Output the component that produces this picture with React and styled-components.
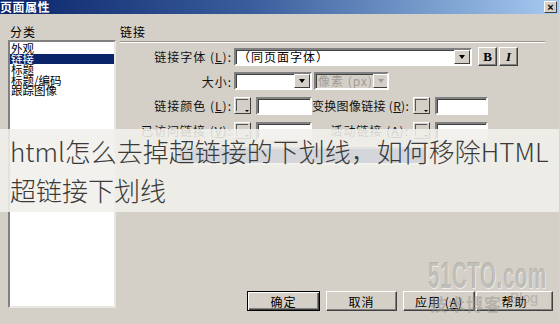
import React from "react";
import styled, { createGlobalStyle } from "styled-components";

const Global = createGlobalStyle`
  html, body { margin: 0; padding: 0; background: #d4d0c8; }
  body { font-family: "Noto Sans CJK SC", "Liberation Sans", sans-serif; }
`;

const Page = styled.div`
  position: relative;
  width: 559px;
  height: 324px;
  overflow: hidden;
  background: #d4d0c8;
  display: flex;
  flex-direction: column;
  font-size: 12px;
  color: #000;
`;

const TitleBar = styled.div`
  height: 14px;
  flex: none;
  display: flex;
  align-items: center;
  justify-content: space-between;
  background: linear-gradient(90deg, #0a246a 0%, #3a5e9c 45%, #a6caf0 100%);
`;

const Title = styled.div`
  color: #fff;
  font-weight: 700;
  font-size: 12px;
  line-height: 14px;
  letter-spacing: 0.5px;
`;

const CloseBtn = styled.div`
  width: 13px;
  height: 12px;
  margin-right: 2px;
  box-sizing: border-box;
  background: #d4d0c8;
  border: 1px solid;
  border-color: #fff #404040 #404040 #fff;
  display: flex;
  align-items: center;
  justify-content: center;
  font-family: "Liberation Sans", sans-serif;
  font-weight: 700;
  font-size: 11px;
  line-height: 1;
`;

const Body = styled.div`
  flex: 1;
  display: flex;
  gap: 4px;
  padding: 12px 14px 13px 8px;
  min-height: 0;
`;

const LeftCol = styled.div`
  width: 108px;
  flex: none;
  display: flex;
  flex-direction: column;
  padding-bottom: 3px;
`;

const SmallLabel = styled.div`
  line-height: 12px;
  padding-left: 2px;
  letter-spacing: 1px;
  margin-bottom: 2px;
`;

const ListBox = styled.div`
  flex: 1;
  background: #fff;
  box-sizing: border-box;
  border: 2px solid;
  border-color: #808080 #e8e6e0 #e8e6e0 #808080;
  padding-top: 1px;
`;

const ListItem = styled.div`
  font-size: 11.5px;
  line-height: 10.6px;
  height: 10.6px;
  padding-left: 1px;
  white-space: nowrap;
  background: ${(p) => (p.$sel ? "#0a246a" : "transparent")};
  color: ${(p) => (p.$sel ? "#fff" : "#000")};
`;

const RightCol = styled.div`
  flex: 1;
  min-width: 0;
  display: flex;
  flex-direction: column;
`;

const Heading = styled.div`
  line-height: 12px;
  letter-spacing: 1px;
`;

const Rule = styled.div`
  height: 0;
  margin-top: 3px;
  border-top: 1px solid #9a9790;
  border-bottom: 1px solid #fff;
  margin-bottom: 4px;
`;

const Form = styled.div`
  display: flex;
  flex-direction: column;
  gap: 6px;
`;

const Row = styled.div`
  display: flex;
  align-items: center;
  height: ${(p) => p.$h || 19}px;
`;

const Label = styled.div`
  width: ${(p) => p.$w}px;
  flex: none;
  box-sizing: border-box;
  text-align: right;
  padding-right: ${(p) => p.$pr || 2}px;
  letter-spacing: ${(p) => p.$ls ?? 1}px;
  white-space: nowrap;
  color: #111;
`;

const Sunken = styled.div`
  width: ${(p) => p.$w}px;
  height: 18px;
  flex: none;
  box-sizing: border-box;
  border: 2px solid;
  border-color: #808080 #fff #fff #808080;
  box-shadow: inset 1px 1px 0 #404040;
  background: ${(p) => (p.$disabled ? "#d4d0c8" : "#fff")};
  display: flex;
  align-items: center;
  margin-left: ${(p) => p.$ml || 0}px;
  overflow: hidden;
`;

const SelText = styled.div`
  flex: 1;
  align-self: stretch;
  padding-left: 2px;
  letter-spacing: 1px;
  white-space: nowrap;
  line-height: 14px;
  color: ${(p) => (p.$disabled ? "#a09d96" : p.$hl ? "#fff" : "#000")};
  background: ${(p) => (p.$hl ? "#0a246a" : "transparent")};
`;

const DropBtn = styled.div`
  width: 16px;
  height: 14px;
  flex: none;
  box-sizing: border-box;
  background: #d4d0c8;
  border: 1px solid;
  border-color: #fff #404040 #404040 #fff;
  display: flex;
  align-items: center;
  justify-content: center;
  &::after {
    content: "";
    border-left: 3.5px solid transparent;
    border-right: 3.5px solid transparent;
    border-top: 4px solid ${(p) => (p.$disabled ? "#a09d96" : "#000")};
  }
`;

const RaisedBtn = styled.div`
  width: 19px;
  height: 19px;
  box-sizing: border-box;
  background: #d4d0c8;
  border: 1px solid;
  border-color: #fff #404040 #404040 #fff;
  box-shadow: inset -1px -1px 0 #808080;
  display: flex;
  align-items: center;
  justify-content: center;
  margin-left: ${(p) => p.$ml || 0}px;
  font-family: "Liberation Serif", serif;
  font-weight: 700;
  font-size: 13px;
  font-style: ${(p) => (p.$italic ? "italic" : "normal")};
`;

const Swatch = styled.div`
  width: 17px;
  height: 17px;
  flex: none;
  box-sizing: border-box;
  border: 1px solid;
  border-color: #fff #404040 #404040 #fff;
  background: #d4d0c8;
  position: relative;
  &::before {
    content: "";
    position: absolute;
    left: 1px;
    top: 1px;
    width: 11px;
    height: 11px;
    border-top: 1px solid #555;
    border-left: 1px solid #555;
  }
  &::after {
    content: "";
    position: absolute;
    right: 1px;
    bottom: 1px;
    border-left: 2px solid transparent;
    border-right: 2px solid transparent;
    border-top: 2px solid #000;
  }
`;

const U = styled.span`
  text-decoration: underline;
`;

const Buttons = styled.div`
  margin-top: auto;
  display: flex;
  justify-content: flex-end;
  margin-right: -8px;
`;

const Btn = styled.div`
  width: ${(p) => p.$w || 71}px;
  flex: none;
  margin-left: ${(p) => p.$ml || 0}px;
  height: 20px;
  box-sizing: border-box;
  background: #d4d0c8;
  border: 1px solid;
  border-color: ${(p) => (p.$def ? "#000" : "#fff #404040 #404040 #fff")};
  box-shadow: ${(p) =>
    p.$def
      ? "inset 1px 1px 0 #fff, inset -1px -1px 0 #404040, inset -2px -2px 0 #808080"
      : "inset -1px -1px 0 #808080"};
  display: flex;
  align-items: center;
  justify-content: center;
  letter-spacing: 1px;
  white-space: nowrap;
`;

const Watermark = styled.div`
  position: absolute;
  left: 428px;
  top: 259px;
  width: 124px;
  pointer-events: none;
  color: rgba(150, 147, 140, 0.5);
`;

const WmBig = styled.div`
  font-family: "Liberation Sans", sans-serif;
  font-weight: 700;
  font-size: 36px;
  line-height: 34px;
  letter-spacing: 1px;
  white-space: nowrap;
  transform: scaleX(0.57);
  transform-origin: left center;
  text-shadow: 1px 1px 0 rgba(255, 255, 255, 0.6);
`;

const WmSmall = styled.div`
  display: flex;
  align-items: flex-start;
  gap: 8px;
  margin-top: -2px;
  padding-left: 2px;
`;

const WmCn = styled.div`
  font-size: 17px;
  line-height: 26px;
  font-weight: 700;
  letter-spacing: 1px;
`;

const WmEn = styled.div`
  font-family: "Liberation Sans", sans-serif;
  font-size: 14px;
  line-height: 14px;
`;

const Overlay = styled.div`
  position: absolute;
  left: 0;
  top: 129px;
  width: 559px;
  height: 83px;
  box-sizing: border-box;
  padding: 2px 0 0 10px;
  background: rgba(240, 239, 235, 0.88);
  color: #3a3a3a;
  font-family: "Noto Sans CJK SC", "Noto Sans", sans-serif;
  font-weight: 300;
  font-size: 26px;
  line-height: 39px;
  white-space: nowrap;
`;

export default function App() {
  return (
    <>
      <Global />
      <Page>
        <TitleBar>
          <Title>页面属性</Title>
          <CloseBtn>×</CloseBtn>
        </TitleBar>
        <Body>
          <LeftCol>
            <SmallLabel>分类</SmallLabel>
            <ListBox>
              <ListItem>外观</ListItem>
              <ListItem $sel>链接</ListItem>
              <ListItem>标题</ListItem>
              <ListItem>标题/编码</ListItem>
              <ListItem>跟踪图像</ListItem>
            </ListBox>
          </LeftCol>
          <RightCol>
            <Heading>链接</Heading>
            <Rule />
            <Form>
              <Row>
                <Label $w={114}>
                  链接字体 (<U>L</U>):
                </Label>
                <Sunken $w={238}>
                  <SelText>（同页面字体）</SelText>
                  <DropBtn />
                </Sunken>
                <RaisedBtn $ml={6}>B</RaisedBtn>
                <RaisedBtn $ml={2} $italic>
                  I
                </RaisedBtn>
              </Row>
              <Row $h={18}>
                <Label $w={114}>大小:</Label>
                <Sunken $w={78}>
                  <SelText />
                  <DropBtn />
                </Sunken>
                <Sunken $w={75} $ml={2} $disabled>
                  <SelText $disabled>像素 (px)</SelText>
                  <DropBtn $disabled />
                </Sunken>
              </Row>
              <Row>
                <Label $w={114}>
                  链接颜色 (<U>L</U>):
                </Label>
                <Swatch />
                <Sunken $w={56} $ml={5} />
                <Label $w={101} $pr={4} $ls={0.3}>
                  变换图像链接 (<U>R</U>):
                </Label>
                <Swatch />
                <Sunken $w={53} $ml={5} />
              </Row>
              <Row>
                <Label $w={114}>
                  已访问链接 (<U>V</U>):
                </Label>
                <Swatch />
                <Sunken $w={56} $ml={5} />
                <Label $w={101} $pr={4}>
                  活动链接 (<U>A</U>):
                </Label>
                <Swatch />
                <Sunken $w={53} $ml={5} />
              </Row>
              <Row>
                <Label $w={58} />
                <Sunken $w={250}>
                  <SelText $hl />
                </Sunken>
              </Row>
            </Form>
            <Buttons>
              <Btn $def $w={73}>确定</Btn>
              <Btn $w={71} $ml={6}>取消</Btn>
              <Btn $w={72} $ml={6}>应用 (<U>A</U>)</Btn>
              <Btn $w={77} $ml={1}>帮助</Btn>
            </Buttons>
          </RightCol>
        </Body>
        <Watermark>
          <WmBig>51CTO.com</WmBig>
          <WmSmall>
            <WmCn>技术博客</WmCn>
            <WmEn>Blog</WmEn>
          </WmSmall>
        </Watermark>
        <Overlay>
          html怎么去掉超链接的下划线，如何移除HTML
          <br />
          超链接下划线
        </Overlay>
      </Page>
    </>
  );
}
